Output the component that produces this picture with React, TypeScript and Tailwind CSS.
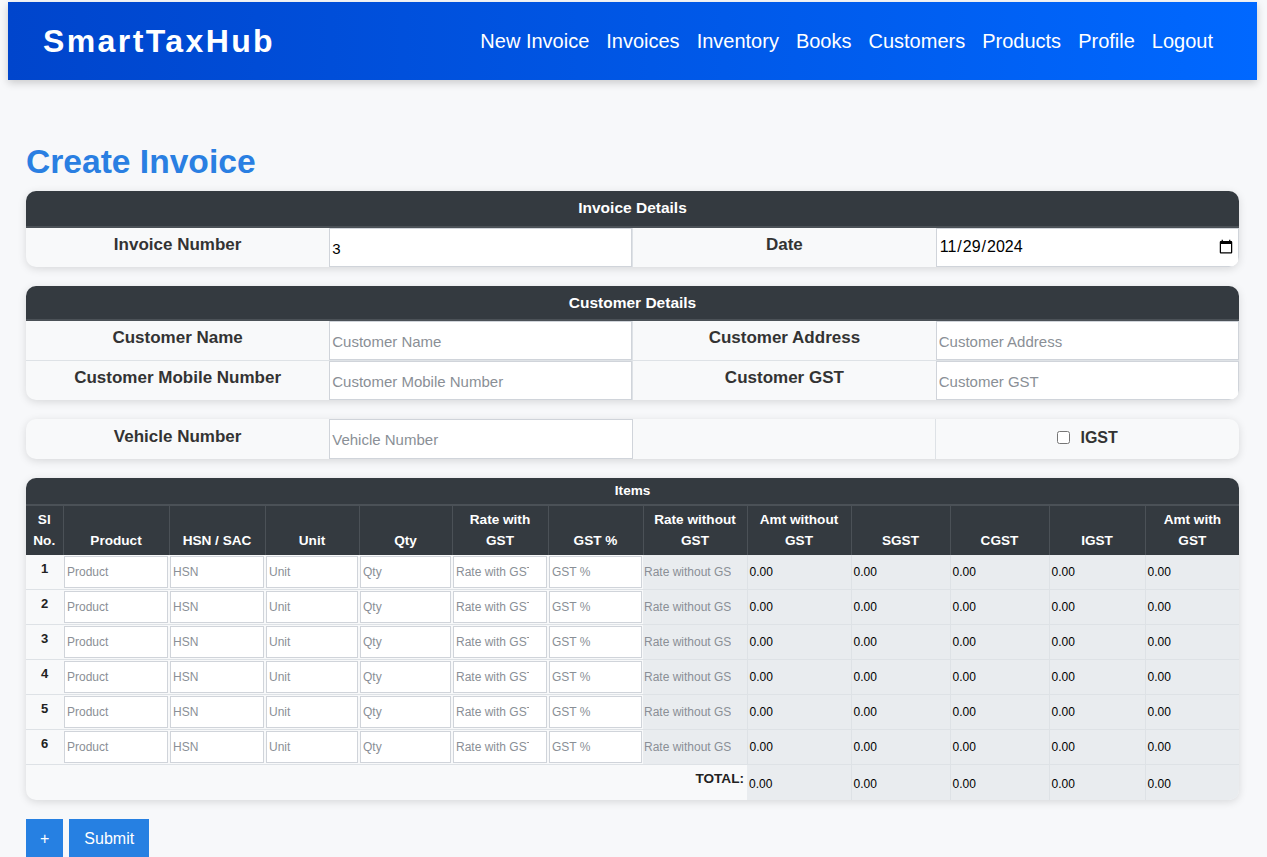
import { useState } from "react";

const navLinks = [
  "New Invoice",
  "Invoices",
  "Inventory",
  "Books",
  "Customers",
  "Products",
  "Profile",
  "Logout",
];

const rows = [1, 2, 3, 4, 5, 6];

const App = () => {
  const [igst, setIgst] = useState(false);

  return (
    <div className="h-screen overflow-hidden bg-[#f7f8fa] font-['Liberation_Sans',Arial,sans-serif] text-[#222]">
      <nav className="ml-2 mr-[10px] mt-[2px] flex h-[78px] items-center justify-between bg-linear-to-r from-[#0045cc] to-[#0068ff] pl-[35px] pr-[44px] shadow-[0_3px_8px_rgba(0,0,0,0.18)]">
        <div className="text-[32px] font-bold tracking-[2.4px] text-white">
          SmartTaxHub
        </div>
        <div className="flex gap-[17px] text-[20px] text-white">
          {navLinks.map((l) => (
            <a key={l} href="#" className="hover:underline">
              {l}
            </a>
          ))}
        </div>
      </nav>

      <main className="pl-[26px] pr-[28px] pt-[63px]">
        <h1 className="mb-[9px] text-[33.6px] font-bold leading-[1.15] text-[#2a7fe2]">
          Create Invoice
        </h1>

        {/* Invoice details */}
        <div className="mb-[19px] overflow-hidden rounded-[10px] bg-[#f8f9fa] shadow-[0_2px_8px_rgba(0,0,0,0.13)]">
          <table className="w-full table-fixed border-collapse">
            <thead>
              <tr>
                <th
                  colSpan={4}
                  className="h-[36px] border-b-2 border-[#4b5157] bg-[#343a40] text-[15.5px] font-bold text-white"
                >
                  <span className="relative -top-[1px]">Invoice Details</span>
                </th>
              </tr>
            </thead>
            <tbody>
              <tr>
                <td className="h-[39px] text-center align-middle text-[17px] font-bold text-[#333]">
                  <span className="relative -top-[2px]">Invoice Number</span>
                </td>
                <td className="p-0">
                  <input
                    type="text"
                    defaultValue="3"
                    className="h-[39px] w-full border border-[#d0d4da] bg-white px-[2px] pt-[2px] text-[15px] text-black outline-none"
                  />
                </td>
                <td className="border-l border-[#dee2e6] text-center text-[17px] font-bold text-[#333]">
                  <span className="relative -top-[2px]">Date</span>
                </td>
                <td className="p-0">
                  <input
                    type="date"
                    defaultValue="2024-11-29"
                    className="h-[39px] w-full border border-[#d0d4da] bg-white px-[2px] text-[16px] text-black outline-none"
                  />
                </td>
              </tr>
            </tbody>
          </table>
        </div>

        {/* Customer details */}
        <div className="mb-[19px] overflow-hidden rounded-[10px] bg-[#f8f9fa] shadow-[0_2px_8px_rgba(0,0,0,0.13)]">
          <table className="w-full table-fixed border-collapse">
            <thead>
              <tr>
                <th
                  colSpan={4}
                  className="h-[34px] border-b-2 border-[#4b5157] bg-[#343a40] text-[15.5px] font-bold text-white"
                >
                  Customer Details
                </th>
              </tr>
            </thead>
            <tbody>
              {[
                ["Customer Name", "Customer Address"],
                ["Customer Mobile Number", "Customer GST"],
              ].map(([a, b], i) => (
                <tr key={a} className={i === 0 ? "border-b border-[#dee2e6]" : ""}>
                  <td className="h-[39px] text-center text-[17px] font-bold text-[#333]">
                    <span className="relative -top-[2px]">{a}</span>
                  </td>
                  <td className="p-0">
                    <input
                      placeholder={a}
                      className="h-[39px] w-full border border-[#d0d4da] bg-white px-[2px] pt-[2px] text-[15px] outline-none placeholder:text-[#8a8f96]"
                    />
                  </td>
                  <td className="border-l border-[#dee2e6] text-center text-[17px] font-bold text-[#333]">
                    <span className="relative -top-[2px]">{b}</span>
                  </td>
                  <td className="p-0">
                    <input
                      placeholder={b}
                      className="h-[39px] w-full border border-[#d0d4da] bg-white px-[2px] pt-[2px] text-[15px] outline-none placeholder:text-[#8a8f96]"
                    />
                  </td>
                </tr>
              ))}
            </tbody>
          </table>
        </div>

        {/* Vehicle */}
        <div className="mb-[19px] overflow-hidden rounded-[10px] bg-[#f8f9fa] shadow-[0_2px_8px_rgba(0,0,0,0.13)]">
          <table className="w-full table-fixed border-collapse">
            <tbody>
              <tr>
                <td className="h-[40px] text-center text-[17px] font-bold text-[#333]">
                  <span className="relative -top-[2px]">Vehicle Number</span>
                </td>
                <td className="p-0">
                  <input
                    placeholder="Vehicle Number"
                    className="h-[40px] w-full border border-[#d0d4da] bg-white px-[2px] pt-[2px] text-[15px] outline-none placeholder:text-[#8a8f96]"
                  />
                </td>
                <td className="border-r border-[#dee2e6]"></td>
                <td className="text-center">
                  <label className="inline-flex items-center gap-[10px] text-[16px] font-bold text-[#333]">
                    <input
                      type="checkbox"
                      checked={igst}
                      onChange={(e) => setIgst(e.target.checked)}
                      className="h-[13px] w-[13px]"
                    />
                    IGST
                  </label>
                </td>
              </tr>
            </tbody>
          </table>
        </div>

        {/* Items */}
        <div className="mb-[19px] overflow-hidden rounded-[10px] bg-[#f8f9fa] shadow-[0_2px_8px_rgba(0,0,0,0.13)]">
          <table className="w-full table-fixed border-collapse text-[13.6px]">
            <colgroup>
              <col className="w-[37px]" />
              <col className="w-[106px]" />
              <col className="w-[96px]" />
              <col className="w-[94px]" />
              <col className="w-[93px]" />
              <col className="w-[96px]" />
              <col className="w-[95px]" />
              <col className="w-[104px]" />
              <col className="w-[104px]" />
              <col className="w-[99px]" />
              <col className="w-[99px]" />
              <col className="w-[96px]" />
              <col className="w-[94px]" />
            </colgroup>
            <thead className="bg-[#343a40] font-bold text-white">
              <tr>
                <th colSpan={13} className="h-[27px] border-b-2 border-[#4b5157] leading-[19px]">
                  Items
                </th>
              </tr>
              <tr className="leading-[21px]">
                {[
                  ["Sl", "No."],
                  ["Product"],
                  ["HSN / SAC"],
                  ["Unit"],
                  ["Qty"],
                  ["Rate with", "GST"],
                  ["GST %"],
                  ["Rate without", "GST"],
                  ["Amt without", "GST"],
                  ["SGST"],
                  ["CGST"],
                  ["IGST"],
                  ["Amt with", "GST"],
                ].map((h, i) => (
                  <th
                    key={i}
                    className="h-[50px] border-x border-[#4b5157] px-[2px] pb-[4px] align-bottom first:border-l-0 last:border-r-0"
                  >
                    {h.map((line) => (
                      <div key={line}>{line}</div>
                    ))}
                  </th>
                ))}
              </tr>
            </thead>
            <tbody>
              {rows.map((n) => (
                <tr key={n} className="h-[35px] border-b border-[#dee2e6]">
                  <td className="pt-[4px] text-center align-top text-[13px] font-bold leading-[20px]">
                    {n}
                  </td>
                  {[
                    ["Product", "text"],
                    ["HSN", "text"],
                    ["Unit", "text"],
                    ["Qty", "number"],
                    ["Rate with GST", "number"],
                    ["GST %", "number"],
                  ].map(([p, t]) => (
                    <td key={p} className="p-[1px]">
                      <input
                        type={t}
                        placeholder={p}
                        className="h-[32px] w-full border border-[#d0d4da] bg-white px-[2px] text-[12px] outline-none placeholder:text-[#8a8f96]"
                      />
                    </td>
                  ))}
                  <td className="border-r border-[#dee2e6] bg-[#e9ecef] p-0">
                    <input
                      type="number"
                      readOnly
                      placeholder="Rate without GST"
                      className="h-[32px] w-full bg-transparent px-[1px] text-[12px] outline-none placeholder:text-[#8a8f96]"
                    />
                  </td>
                  {[0, 1, 2, 3, 4].map((k) => (
                    <td
                      key={k}
                      className="border-r border-[#dee2e6] bg-[#e9ecef] px-[2px] text-[12px] text-black last:border-r-0"
                    >
                      0.00
                    </td>
                  ))}
                </tr>
              ))}
              <tr className="h-[35px]">
                <td
                  colSpan={8}
                  className="pr-[3px] pt-[6px] text-right align-top text-[13.6px] font-bold leading-[16px] text-[#222]"
                >
                  TOTAL:
                </td>
                {[0, 1, 2, 3, 4].map((k) => (
                  <td
                    key={k}
                    className="border-r border-[#dee2e6] bg-[#e9ecef] px-[2px] pt-[3px] text-[12px] text-black last:border-r-0"
                  >
                    0.00
                  </td>
                ))}
              </tr>
            </tbody>
          </table>
        </div>

        <div className="flex gap-[6px]">
          <button className="h-[40px] bg-[#2680e2] px-[14px] text-[16px] text-white">
            +
          </button>
          <button className="h-[40px] bg-[#2680e2] px-[15px] text-[16px] text-white">
            Submit
          </button>
        </div>
      </main>
    </div>
  );
};

export default App;
